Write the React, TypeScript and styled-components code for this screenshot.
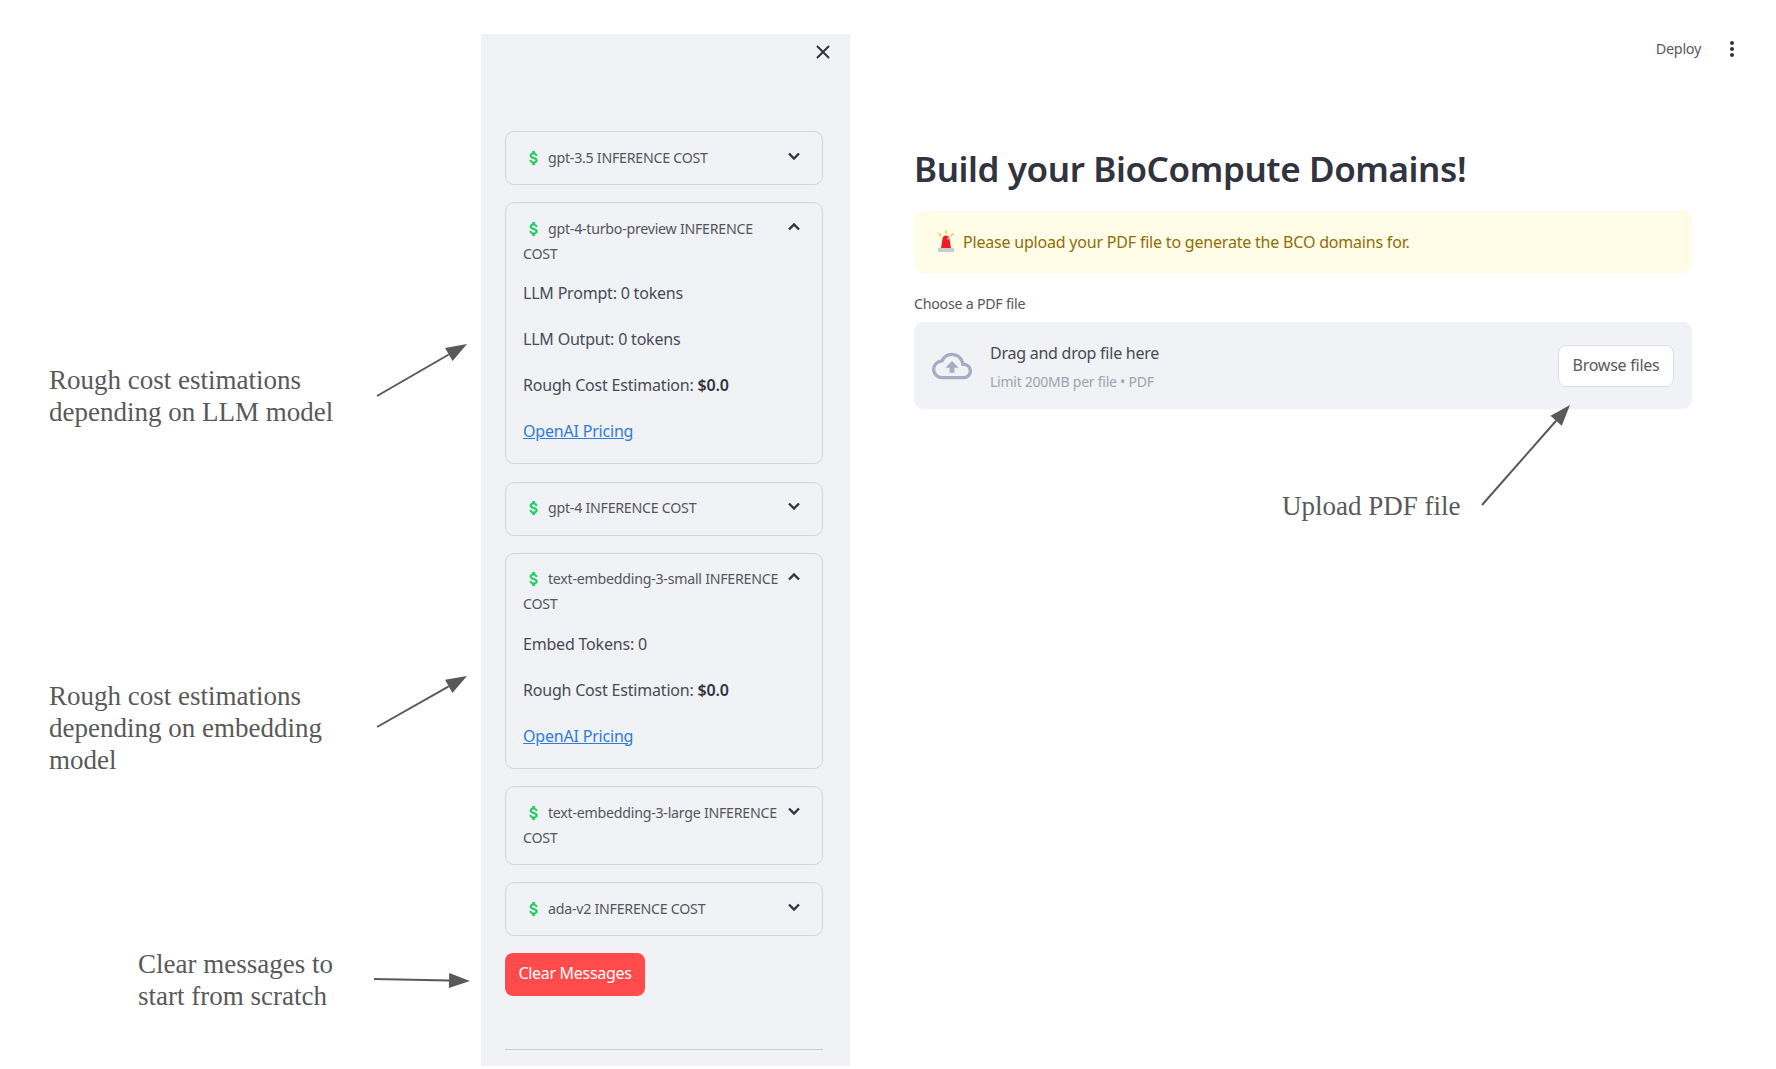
import React from "react";
import styled, { createGlobalStyle } from "styled-components";
import { MdMoreVert, MdOutlineCloudUpload } from "react-icons/md";

const FONT = `"Noto Sans", "Open Sans", "Liberation Sans", sans-serif`;

const Global = createGlobalStyle`
  html, body { margin: 0; padding: 0; background: #fff; }
  body { font-family: ${FONT}; color: #31333f; }
  * { box-sizing: border-box; }
`;

const Page = styled.div`
  position: relative;
  display: grid;
  grid-template-columns: 481px 369px 1fr;
  width: 1776px;
  height: 1069px;
  overflow: hidden;
  background: #fff;
`;

const Gutter = styled.div``;

const Sidebar = styled.aside`
  margin-top: 34px;
  height: 1032px;
  padding: 0 27px 0 24px;
  background: #f0f2f6;
  display: flex;
  flex-direction: column;
`;

const SidebarHead = styled.div`
  height: 97px;
  padding-top: 6px;
  margin-right: -12px;
  display: flex;
  justify-content: flex-end;
  align-items: flex-start;
  color: #31333f;
`;

const Stack = styled.div`
  display: flex;
  flex-direction: column;
  gap: 17.3px;
`;

const Expander = styled.section`
  border: 1px solid #d3d5da;
  border-radius: 9px;
  padding: 0 18px 0 17px;
`;

const ExpanderHead = styled.div`
  display: flex;
  align-items: flex-start;
  padding: 12.5px 0 14.5px;
`;

const ExpanderLabel = styled.div`
  flex: 1;
  font-size: 14.2px;
  line-height: 25px;
  letter-spacing: -0.25px;
  color: #54565f;
`;

const DollarMark = styled.svg`
  width: 18px;
  height: 18px;
  margin: 0 5px 0 2px;
  vertical-align: -4px;
  fill: #1fcb60;
  stroke: #1fcb60;
  stroke-width: 0.8;
`;

const Chevron = styled.svg`
  flex: none;
  width: 24px;
  height: 24px;
  margin: -1px -1.5px 0 1.5px;
  fill: none;
  stroke: #31333f;
  stroke-width: 2.3;
`;

const ExpanderBody = styled.div`
  padding-bottom: 19px;
`;

const BodyLine = styled.p`
  margin: 0 0 20px;
  font-size: 16px;
  line-height: 26px;
  letter-spacing: -0.2px;
  color: #484a55;
  &:last-child { margin-bottom: 0; }
  strong { font-weight: 600; color: #31333f; }
`;

const PricingLink = styled.a`
  color: #2f7bd6;
  text-decoration: underline;
`;

const ClearButton = styled.button`
  margin-top: 16.5px;
  width: 140px;
  height: 43px;
  border: 0;
  border-radius: 8px;
  background: #ff4b4b;
  color: #fff;
  font-family: ${FONT};
  font-size: 16px;
  letter-spacing: -0.3px;
  padding: 0 0 2px;
`;

const Divider = styled.hr`
  margin: 53px 0 0;
  border: 0;
  border-top: 1px solid #c8cad0;
`;

const Main = styled.main`
  display: flex;
  flex-direction: column;
`;

const TopBar = styled.header`
  height: 98px;
  padding-right: 32px;
  display: flex;
  justify-content: flex-end;
  align-items: center;
  gap: 19px;
`;

const Deploy = styled.span`
  font-size: 14.4px;
  letter-spacing: -0.3px;
  color: #575964;
  margin-bottom: 1px;
`;

const Dots = styled.span`
  width: 24px;
  height: 24px;
  font-size: 24px;
  line-height: 0;
  color: #31333f;
`;

const Content = styled.div`
  padding: 0 84px 0 64px;
  display: flex;
  flex-direction: column;
`;

const Title = styled.h1`
  margin: 41px 0 12px;
  font-size: 35px;
  line-height: 60px;
  font-weight: 600;
  letter-spacing: -0.4px;
  color: #31333f;
`;

const Alert = styled.div`
  height: 62px;
  padding-left: 22px;
  display: flex;
  align-items: center;
  gap: 7px;
  border-radius: 9px;
  background: #fffce7;
  color: #926c05;
  font-size: 16px;
  letter-spacing: -0.2px;
`;

const FieldLabel = styled.label`
  margin: 21px 0 8px;
  font-size: 14.2px;
  line-height: 20px;
  letter-spacing: -0.24px;
  color: #54565f;
`;

const Uploader = styled.div`
  height: 87px;
  padding: 0 18px;
  display: flex;
  align-items: center;
  border-radius: 9px;
  background: #f0f2f6;
`;

const CloudIcon = styled(MdOutlineCloudUpload)`
  flex: none;
  font-size: 40px;
  color: #a3aec5;
  margin-right: 18px;
`;

const UploadText = styled.div`
  flex: 1;
  margin-top: 2px;
  display: flex;
  flex-direction: column;
  gap: 9px;
`;

const UploadTitle = styled.span`
  font-size: 16px;
  line-height: 22px;
  letter-spacing: -0.25px;
  color: #484a55;
`;

const UploadHint = styled.span`
  font-size: 14px;
  line-height: 18px;
  letter-spacing: -0.25px;
  color: #a0a3af;
`;

const BrowseButton = styled.button`
  width: 116px;
  height: 42px;
  padding: 0 0 1px;
  border: 1px solid #dcdee2;
  border-radius: 8px;
  background: #fff;
  color: #575964;
  font-family: ${FONT};
  font-size: 16px;
  letter-spacing: -0.25px;
`;

const Note = styled.div<{ $x: number; $y: number }>`
  position: absolute;
  left: ${(p) => p.$x}px;
  top: ${(p) => p.$y}px;
  font-family: "Liberation Serif", "Times New Roman", serif;
  font-size: 27px;
  line-height: 32px;
  color: #595959;
  white-space: nowrap;
`;

const ArrowLayer = styled.svg`
  position: absolute;
  left: 0;
  top: 0;
  width: 1776px;
  height: 1069px;
  pointer-events: none;
`;

function AlarmEmoji() {
  return (
    <svg width="20" height="24" viewBox="0 0 20 24" aria-hidden="true">
      <path d="M2.5 3.5 5 6M10 .5V3.5M17.5 3.5 15 6" stroke="#f2c230" strokeWidth="1.5" fill="none" />
      <path d="M5 18 6.6 8.2C6.9 6.6 8.3 5.5 10 5.5s3.1 1.1 3.4 2.7L15 18Z" fill="#ee1c25" />
      <circle cx="12" cy="8.5" r="1.1" fill="#ffb3b3" />
      <rect x="2" y="18" width="16" height="4" fill="#c9ccd1" />
    </svg>
  );
}

function Arrow({ x1, y1, x2, y2 }: { x1: number; y1: number; x2: number; y2: number }) {
  const a = Math.atan2(y2 - y1, x2 - x1);
  const len = 21;
  const wide = 7.5;
  const bx = x2 - Math.cos(a) * len;
  const by = y2 - Math.sin(a) * len;
  const nx = -Math.sin(a) * wide;
  const ny = Math.cos(a) * wide;
  return (
    <g>
      <line x1={x1} y1={y1} x2={bx} y2={by} stroke="#595959" strokeWidth="2" />
      <polygon points={`${x2},${y2} ${bx + nx},${by + ny} ${bx - nx},${by - ny}`} fill="#595959" />
    </g>
  );
}

type Item = { name: string; open: boolean; lines?: React.ReactNode[] };

const cost = (
  <>
    Rough Cost Estimation: <strong>$0.0</strong>
  </>
);
const link = <PricingLink href="#">OpenAI Pricing</PricingLink>;

const items: Item[] = [
  { name: "gpt-3.5 INFERENCE COST", open: false },
  { name: "gpt-4-turbo-preview INFERENCE COST", open: true, lines: ["LLM Prompt: 0 tokens", "LLM Output: 0 tokens", cost, link] },
  { name: "gpt-4 INFERENCE COST", open: false },
  { name: "text-embedding-3-small INFERENCE COST", open: true, lines: ["Embed Tokens: 0", cost, link] },
  { name: "text-embedding-3-large INFERENCE COST", open: false },
  { name: "ada-v2 INFERENCE COST", open: false },
];

export default function App() {
  return (
    <Page>
      <Global />
      <Gutter />
      <Sidebar>
        <SidebarHead>
          <svg width="24" height="24" viewBox="0 0 24 24" fill="none" stroke="#31333f" strokeWidth="2" aria-hidden="true">
            <path d="M6 6 18 18M18 6 6 18" />
          </svg>
        </SidebarHead>
        <Stack>
          {items.map((item) => (
            <Expander key={item.name}>
              <ExpanderHead>
                <ExpanderLabel>
                  <DollarMark viewBox="0 0 24 24" aria-hidden="true">
                    <path d="M11.8 10.9c-2.27-.59-3-1.2-3-2.15 0-1.09 1.01-1.85 2.7-1.85 1.78 0 2.44.85 2.5 2.1h2.21c-.07-1.72-1.12-3.3-3.21-3.81V3h-3v2.16c-1.94.42-3.5 1.68-3.5 3.61 0 2.31 1.91 3.46 4.7 4.13 2.5.6 3 1.48 3 2.41 0 .69-.49 1.79-2.7 1.79-2.06 0-2.87-.92-2.98-2.1h-2.2c.12 2.19 1.76 3.42 3.68 3.83V21h3v-2.15c1.95-.37 3.5-1.5 3.5-3.55 0-2.84-2.43-3.81-4.7-4.4z" />
                  </DollarMark>
                  {item.name}
                </ExpanderLabel>
                <Chevron viewBox="0 0 24 24" aria-hidden="true">
                  <path d={item.open ? "M7 14.5 12 9.5 17 14.5" : "M7 9.5 12 14.5 17 9.5"} />
                </Chevron>
              </ExpanderHead>
              {item.lines && (
                <ExpanderBody>
                  {item.lines.map((line, i) => (
                    <BodyLine key={i}>{line}</BodyLine>
                  ))}
                </ExpanderBody>
              )}
            </Expander>
          ))}
        </Stack>
        <ClearButton>Clear Messages</ClearButton>
        <Divider />
      </Sidebar>
      <Main>
        <TopBar>
          <Deploy>Deploy</Deploy>
          <Dots>
            <MdMoreVert />
          </Dots>
        </TopBar>
        <Content>
          <Title>Build your BioCompute Domains!</Title>
          <Alert>
            <AlarmEmoji />
            Please upload your PDF file to generate the BCO domains for.
          </Alert>
          <FieldLabel>Choose a PDF file</FieldLabel>
          <Uploader>
            <CloudIcon />
            <UploadText>
              <UploadTitle>Drag and drop file here</UploadTitle>
              <UploadHint>Limit 200MB per file • PDF</UploadHint>
            </UploadText>
            <BrowseButton>Browse files</BrowseButton>
          </Uploader>
        </Content>
      </Main>
      <Note $x={49} $y={364}>
        Rough cost estimations
        <br />
        depending on LLM model
      </Note>
      <Note $x={49} $y={679.5}>
        Rough cost estimations
        <br />
        depending on embedding
        <br />
        model
      </Note>
      <Note $x={138} $y={947.5}>
        Clear messages to
        <br />
        start from scratch
      </Note>
      <Note $x={1282} $y={490}>
        Upload PDF file
      </Note>
      <ArrowLayer viewBox="0 0 1776 1069" aria-hidden="true">
        <Arrow x1={377} y1={396} x2={467} y2={344} />
        <Arrow x1={377} y1={727} x2={467} y2={676} />
        <Arrow x1={374} y1={979} x2={470} y2={981} />
        <Arrow x1={1482} y1={505} x2={1570} y2={405} />
      </ArrowLayer>
    </Page>
  );
}
